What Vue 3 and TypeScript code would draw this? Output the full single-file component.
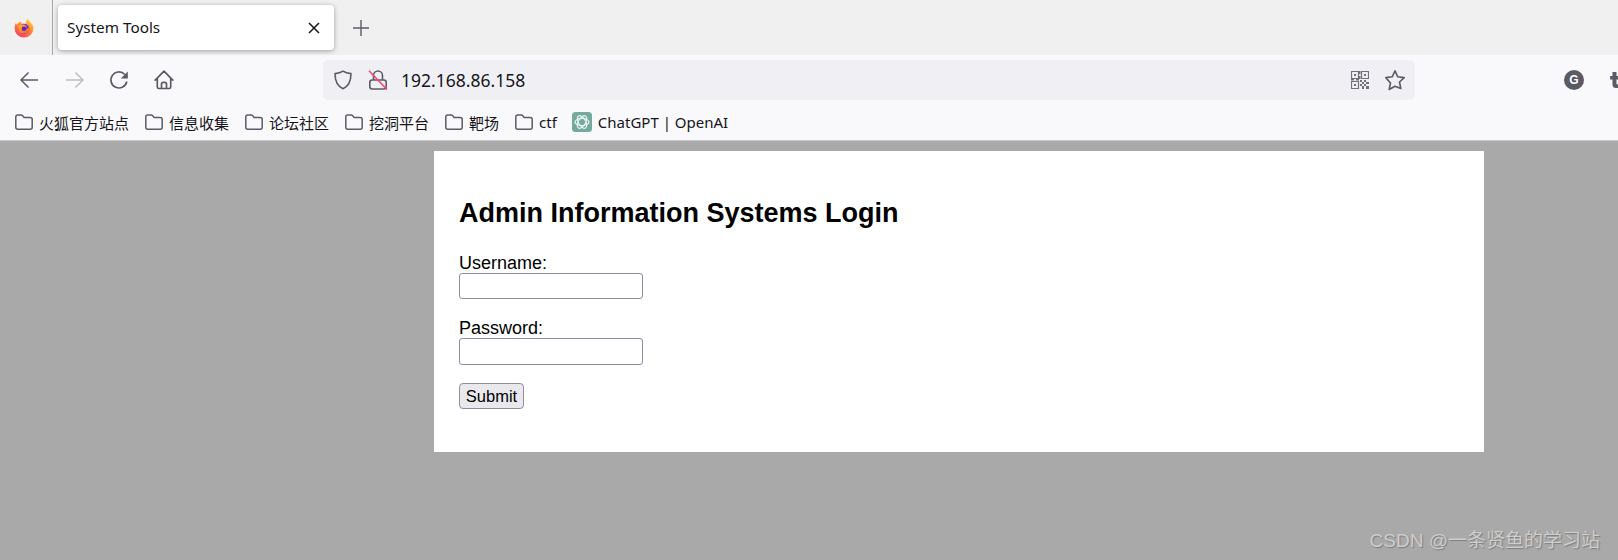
<script setup lang="ts">
interface Mark { label: string; chat?: boolean }
const bookmarks: Mark[] = [
  { label: '火狐官方站点' },
  { label: '信息收集' },
  { label: '论坛社区' },
  { label: '挖洞平台' },
  { label: '靶场' },
  { label: 'ctf' },
  { label: 'ChatGPT | OpenAI', chat: true },
]
</script>

<template>
  <div class="window">
    <header class="tabbar">
      <div class="pinned">
        <svg class="fx" viewBox="0 0 20 20" width="20" height="20">
          <defs>
            <linearGradient id="fxg" x1="0.8" y1="0" x2="0.2" y2="1">
              <stop offset="0" stop-color="#ffd93b" />
              <stop offset="0.45" stop-color="#ff8a2b" />
              <stop offset="1" stop-color="#f5376f" />
            </linearGradient>
            <linearGradient id="fxo" x1="0" y1="0" x2="1" y2="1">
              <stop offset="0" stop-color="#ffb52e" />
              <stop offset="1" stop-color="#ff5a2e" />
            </linearGradient>
          </defs>
          <path d="M10 19.600a9.400 9.400 0 0 1-9.400-9.600c0-2 .5-3.600 1.400-5 .3 1 .6 1.500 1 1.800C4 4.800 6 3.800 7.800 3.700 7 4.500 6.700 5.100 6.900 5.600c1.500-.2 3.600 0 4.800 1.200C11.300 4.200 12.600 1.800 14.200.5c0 1.800 1.400 2.900 2.800 4.400 1.600 1.700 2.400 3.500 2.400 5.100a9.400 9.400 0 0 1-9.400 9.600z" fill="url(#fxg)" />
          <circle cx="10.200" cy="10.800" r="5" fill="#7a35d6" />
          <path d="M4.800 7.400c2.400-1.400 5.800-1.400 7.200.4 1 1.400.4 2.800-1 3.200 2 .6 4-.8 4.200-3 .7 1.700.6 3.700-.6 5.200-1.400 1.900-4 2.600-6 1.900C5.400 14.700 3.800 11.200 4.800 7.400z" fill="url(#fxo)" />
          <circle cx="10" cy="10.800" r="2.300" fill="#5c26bd" />
        </svg>
      </div>
      <div class="tab">
        <span class="tab-title">System Tools</span>
        <svg class="tab-close" viewBox="0 0 12 12" width="12" height="12">
          <path d="M1 1l10 10M11 1L1 11" stroke="#15141a" stroke-width="1.500" fill="none" />
        </svg>
      </div>
      <svg class="newtab" viewBox="0 0 16 16" width="16" height="16">
        <path d="M8 0v16M0 8h16" stroke="#5b5b66" stroke-width="1.400" fill="none" />
      </svg>
    </header>

    <nav class="toolbar">
      <div class="nav-buttons">
        <button class="nav-btn" type="button" aria-label="Back">
          <svg viewBox="0 0 20 20" width="20" height="20"><path d="M19 10H2M9.500 2.500L2 10l7.500 7.500" stroke="#5b5b66" stroke-width="1.500" fill="none" /></svg>
        </button>
        <button class="nav-btn" type="button" aria-label="Forward">
          <svg viewBox="0 0 20 20" width="20" height="20"><path d="M2 10h17M11.500 2.500L19 10l-7.500 7.500" stroke="#bdbdc2" stroke-width="1.500" fill="none" /></svg>
        </button>
        <button class="nav-btn" type="button" aria-label="Reload">
          <svg viewBox="0 0 20 20" width="20" height="20"><path d="M17.800 11.500A8 8 0 1 1 15.800 4.500" stroke="#5b5b66" stroke-width="1.700" fill="none" /><path d="M18.800 1.500V8.500h-7z" fill="#5b5b66" /></svg>
        </button>
        <button class="nav-btn" type="button" aria-label="Home">
          <svg viewBox="0 0 20 20" width="20" height="20"><path d="M1.200 10.200L10 1.200l8.800 9M3.300 8.500v8.400c0 1 .6 1.600 1.600 1.600h10.200c1 0 1.600-.6 1.600-1.600V8.500M7.500 18.500v-4.300c0-1.100.8-1.900 1.800-1.900h1.400c1 0 1.800.8 1.800 1.900v4.300" stroke="#5b5b66" stroke-width="1.700" fill="none" stroke-linejoin="round" stroke-linecap="round" /></svg>
        </button>
      </div>

      <div class="urlbar">
        <svg class="shield" viewBox="0 0 20 20" width="20" height="20">
          <path d="M10 1.200c2 1.400 4.600 2.200 8 2.400 0 7-1.800 12.400-8 15.200C3.800 16 2 10.600 2 3.600c3.400-.2 6-1 8-2.400z" stroke="#5b5b66" stroke-width="1.600" fill="none" stroke-linejoin="round" />
        </svg>
        <svg class="lock" viewBox="0 0 20 20" width="20" height="20">
          <path d="M5.500 10V5.500a4.500 4.500 0 0 1 9 0V10" stroke="#5b5b66" stroke-width="1.600" fill="none" />
          <rect x="1.800" y="10" width="16.400" height="9" rx="2.400" stroke="#5b5b66" stroke-width="1.600" fill="none" />
          <path d="M1 .8l18 18.700" stroke="#f4466f" stroke-width="1.600" />
        </svg>
        <span class="url">192.168.86.158</span>
        <svg class="qr" viewBox="0 0 18 18" width="18" height="18">
          <path d="M.5.500h7v7h-7zM10.500.500h7v7h-7zM.5 10.500h7v7h-7z" stroke="#5b5b66" stroke-width="1.200" fill="none" />
          <path d="M3 3h2v2H3zM13 3h2v2h-2zM3 13h2v2H3zM9 9h2v2H9zM13 9h2v2h-2zM11 11h2v2h-2zM15 11h3v2h-3zM9 13h2v2H9zM13 13h2v2h-2zM11 15h2v3h-2zM15 15h3v3h-3zM8 0h1.500v3H8zM8 5h1.500v3H8zM0 8h3v1.500H0zM5 8h3v1.500H5z" fill="#5b5b66" />
        </svg>
        <svg class="star" viewBox="0 0 22 22" width="22" height="22">
          <path d="M11 1.800l2.800 6 6.400.8-4.700 4.400 1.300 6.500L11 17.200l-5.800 3.300 1.300-6.500L1.800 8.600l6.400-.8z" stroke="#5b5b66" stroke-width="1.600" fill="none" stroke-linejoin="round" />
        </svg>
      </div>

      <div class="extensions">
        <span class="ext-g">G</span>
        <svg class="ext-t" viewBox="0 0 16 20" width="13" height="16">
          <path d="M3 0h5v5h6v4.500H8V14c0 1 .5 1.500 1.500 1.500H14V20H7c-2.500 0-4-1.500-4-4V9.500H0V5h3z" fill="#5b5b66" />
        </svg>
      </div>
    </nav>

    <div class="bookmarks">
      <div v-for="mark in bookmarks" :key="mark.label" class="mark" :class="{ 'mark-chat': mark.chat }">
        <svg v-if="mark.chat" class="mark-icon" viewBox="0 0 20 20" width="20" height="20">
          <rect width="20" height="20" rx="3.500" fill="#74aa9c" />
          <g stroke="#fff" stroke-width="1.200" fill="none" opacity="0.85">
            <ellipse cx="10" cy="10" rx="7" ry="3.600" />
            <ellipse cx="10" cy="10" rx="7" ry="3.600" transform="rotate(60 10 10)" />
            <ellipse cx="10" cy="10" rx="7" ry="3.600" transform="rotate(120 10 10)" />
          </g>
        </svg>
        <svg v-else class="mark-icon" viewBox="0 0 18 16" width="18" height="16">
          <path d="M.8 3c0-1.200.8-2 2-2h3.400c.8 0 1.200.3 1.700.9L9 3.400h6.200c1.200 0 2 .8 2 2v7.800c0 1.200-.8 2-2 2H2.800c-1.200 0-2-.8-2-2z" stroke="#5b5b66" stroke-width="1.500" fill="none" />
        </svg>
        <span class="mark-label">{{ mark.label }}</span>
      </div>
    </div>

    <main class="page">
      <section class="card">
        <h1 class="title">Admin Information Systems Login</h1>
        <form class="form" @submit.prevent>
          <div class="field">
            <label class="label" for="username">Username:</label>
            <input id="username" class="input" type="text" />
          </div>
          <div class="field field-password">
            <label class="label" for="password">Password:</label>
            <input id="password" class="input" type="password" />
          </div>
          <button class="submit" type="submit">Submit</button>
        </form>
      </section>
      <div class="watermark">CSDN @一条贤鱼的学习站</div>
    </main>
  </div>
</template>

<style>
html, body { margin: 0; padding: 0; }
body { overflow: hidden; }
</style>

<style scoped>
.window {
  width: 1618px;
  height: 560px;
  display: flex;
  flex-direction: column;
  overflow: hidden;
  font-family: "Noto Sans", "Noto Sans CJK SC", sans-serif;
  color: #15141a;
  background: #a9a9a9;
}

.tabbar {
  height: 55px;
  flex: none;
  display: flex;
  align-items: center;
  background: #f0f0f1;
}
.pinned {
  width: 53px;
  height: 55px;
  flex: none;
  box-sizing: border-box;
  border-right: 1px solid #a8a8aa;
  padding-left: 14px;
  display: flex;
  align-items: center;
}
.tab {
  width: 276px;
  height: 45px;
  margin-left: 5px;
  box-sizing: border-box;
  padding: 0 14px 2px 9px;
  display: flex;
  align-items: center;
  justify-content: space-between;
  background: #fff;
  border-radius: 4px;
  box-shadow: 0 1px 5px rgba(0, 0, 0, 0.35);
}
.tab-title { font-size: 15.300px; }
.tab-close { margin-top: 2px; }
.newtab { margin-left: 19px; }

.toolbar {
  height: 47px;
  flex: none;
  box-sizing: border-box;
  padding-top: 5px;
  display: flex;
  align-items: flex-start;
  background: #f9f9fb;
}
.nav-buttons {
  width: 323px;
  flex: none;
  display: flex;
  padding-left: 6px;
  box-sizing: border-box;
}
.nav-btn {
  width: 45px;
  height: 40px;
  padding: 0;
  border: 0;
  background: none;
  display: flex;
  align-items: center;
  justify-content: center;
}
.urlbar {
  width: 1092px;
  height: 40px;
  flex: none;
  box-sizing: border-box;
  display: flex;
  align-items: center;
  background: #f0f0f4;
  border-radius: 5px;
  padding: 0 9px 0 10px;
}
.lock { margin-left: 15px; }
.url { margin-left: 13px; font-size: 17.500px; flex: 1; }
.qr { opacity: 0.85; }
.star { margin-left: 15px; }
.extensions {
  height: 40px;
  display: flex;
  align-items: center;
  margin-left: 149px;
  flex: none;
}
.ext-g {
  width: 20px;
  height: 20px;
  border-radius: 50%;
  background: #5b5b66;
  color: #fff;
  font: bold 12px/20px "Liberation Sans", sans-serif;
  text-align: center;
}
.ext-t { margin-left: 26px; flex: none; }

.bookmarks {
  height: 39px;
  flex: none;
  display: flex;
  align-items: center;
  padding: 2px 0 0 15px;
  box-sizing: border-box;
  background: #f9f9fb;
  border-bottom: 1px solid #c8c8ca;
}
.mark {
  display: flex;
  align-items: center;
  margin-right: 16px;
}
.mark-chat { margin-left: -1px; }
.mark-icon { flex: none; }
.mark-label { margin-left: 6px; font-size: 15px; }

.page {
  flex: 1;
  position: relative;
  background: #a9a9a9;
  padding: 10px 0 0 434px;
}
.card {
  width: 1050px;
  height: 301px;
  box-sizing: border-box;
  background: #fff;
  padding: 47px 24px 0 25px;
  color: #000;
  font-family: "Liberation Sans", Arial, sans-serif;
}
.title {
  margin: 0;
  font-size: 27px;
  line-height: 31px;
  font-weight: bold;
}
.form { margin-top: 24px; }
.field {
  display: flex;
  flex-direction: column;
  align-items: flex-start;
  margin-bottom: 19px;
}
.field-password { margin-bottom: 18px; }
.label {
  font-size: 18px;
  line-height: 20px;
}
.input {
  width: 184px;
  height: 26px;
  box-sizing: border-box;
  margin: 0;
  padding: 0 4px;
  border: 1px solid #8f8f9d;
  border-radius: 3px;
  background: #fff;
}
.field-password .input { height: 27px; }
.submit {
  display: block;
  width: 65px;
  height: 26px;
  box-sizing: border-box;
  padding: 0;
  border: 1px solid #8f8f9d;
  border-radius: 4px;
  background: #e9e9ed;
  color: #000;
  font: 16.500px "Liberation Sans", Arial, sans-serif;
}
.watermark {
  position: absolute;
  right: 18px;
  bottom: 8px;
  font-size: 19px;
  line-height: 22px;
  color: #cdcdcd;
  text-shadow: 1px 1px 1px #7d7d7d;
  font-family: "Liberation Sans", "Noto Sans CJK SC", sans-serif;
}
</style>
